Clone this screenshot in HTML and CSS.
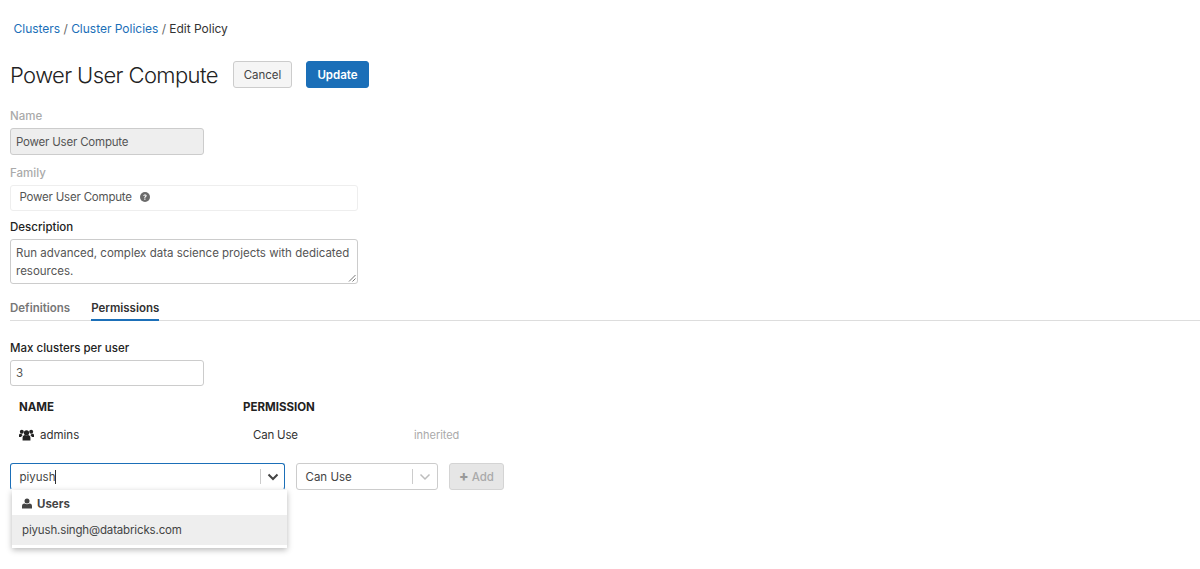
FILE: index.html
```html
<!DOCTYPE html>
<html lang="en">
<head>
<meta charset="utf-8">
<title>Edit Policy</title>
<link rel="stylesheet" href="styles.css">
</head>
<body>
<main class="page">
  <nav class="crumbs"><a href="#">Clusters</a> / <a href="#">Cluster Policies</a> / <span class="crumb-current">Edit Policy</span></nav>
  <header class="title-row">
    <h1>Power User Compute</h1>
    <button class="btn btn-cancel">Cancel</button>
    <button class="btn btn-update">Update</button>
  </header>

  <label class="label label-muted label-name">Name</label>
  <div class="field field-short field-disabled">Power User Compute</div>

  <label class="label label-muted label-family">Family</label>
  <div class="field field-long field-family"><span>Power User Compute</span>
    <svg class="help" viewBox="0 0 16 16" width="10" height="10"><circle cx="8" cy="8" r="8" fill="#6b6b6b"/><path d="M5.400 6.100c.1-1.500 1.200-2.300 2.700-2.300 1.500 0 2.600.8 2.600 2.100 0 1-.6 1.500-1.300 2-.6.4-.8.6-.8 1.200v.3H6.900v-.4c0-1 .4-1.500 1.100-2 .5-.3.8-.6.8-1 0-.5-.4-.8-.9-.8-.6 0-1 .4-1 1H5.400zM6.800 10.400h1.900v1.800H6.800z" fill="#fff"/></svg>
  </div>

  <label class="label label-desc">Description</label>
  <div class="field field-long field-desc">Run advanced, complex data science projects with dedicated resources.
    <svg class="grip" viewBox="0 0 8 8" width="8" height="8"><path d="M1 7.500 7.500 1M4.500 7.500 7.500 4.500" stroke="#777" stroke-width="1" fill="none"/></svg>
  </div>

  <div class="tabs">
    <span class="tab">Definitions</span>
    <span class="tab tab-active">Permissions</span>
  </div>

  <label class="label label-max">Max clusters per user</label>
  <div class="field field-short field-max">3</div>

  <div class="table-head">
    <span class="col-name">NAME</span>
    <span>PERMISSION</span>
  </div>
  <div class="table-row">
    <span class="col-name admins">
      <svg class="group-icon" viewBox="0 0 16 12" width="15" height="12"><circle cx="8" cy="3.600" r="2.800" fill="#222"/><circle cx="3" cy="2.600" r="2.100" fill="#222"/><circle cx="13" cy="2.600" r="2.100" fill="#222"/><path d="M3.800 11.800V9c0-1.800 1.400-2.900 2.600-2.900.5.300 1 .5 1.600.5s1.100-.2 1.600-.5c1.200 0 2.600 1.100 2.600 2.900v2.800zM0 8V6.300C0 5 .8 4.700 1.600 4.700c.4.300.9.400 1.400.4.200.4.500.8.900 1.100-.9.400-1.400 1-1.600 1.800zM16 8V6.300c0-1.300-.8-1.600-1.600-1.600-.4.300-.9.400-1.400.4-.2.400-.5.800-.9 1.100.9.400 1.400 1 1.600 1.800z" fill="#222"/></svg>
      admins
    </span>
    <span class="can-use">Can Use</span>
    <span class="inherited">inherited</span>
  </div>

  <div class="add-row">
    <div class="select select-user">
      <span class="select-value">piyush<i class="caret"></i></span>
      <span class="select-sep"></span>
      <svg class="chev" viewBox="0 0 12 8" width="12" height="8"><path d="M1.500 1.500 6 6l4.500-4.500" stroke="#444" stroke-width="2" fill="none"/></svg>
      <div class="menu">
        <div class="menu-group">
          <svg viewBox="0 0 12 12" width="10" height="11"><circle cx="6" cy="3" r="3" fill="#444"/><path d="M0 12V9c0-2 1.500-3 3-3 .9.600 1.900.9 3 .9s2.100-.3 3-.9c1.500 0 3 1 3 3v3z" fill="#444"/></svg>
          Users
        </div>
        <div class="menu-item">piyush.singh@databricks.com</div>
      </div>
    </div>
    <div class="select select-perm">
      <span class="select-value">Can Use</span>
      <span class="select-sep"></span>
      <svg class="chev" viewBox="0 0 12 8" width="12" height="8"><path d="M1.500 1.500 6 6l4.500-4.500" stroke="#bdbdbd" stroke-width="1.500" fill="none"/></svg>
    </div>
    <button class="btn btn-add"><span class="plus">+</span> Add</button>
  </div>
</main>
</body>
</html>
```
FILE: styles.css
```css
* { box-sizing: border-box; }
html, body { margin: 0; padding: 0; }
body {
  font-family: Inter, "Liberation Sans", sans-serif;
  font-size: 11.500px;
  color: #333;
  background: #fff;
  height: 569px;
  overflow: hidden;
}
.page { padding: 21px 0 0 10px; }
.crumbs { height: 15px; line-height: 15px; padding-left: 3.500px; color: #666; font-size: 12px; letter-spacing: -0.020px; }
.crumbs a { color: #1b6fb8; text-decoration: none; }
.crumb-current { color: #333; }

.title-row { display: flex; align-items: center; height: 27px; margin-top: 25px; }
h1 { margin: 0; font-size: 22px; font-weight: 300; color: #222; letter-spacing: -0.600px; width: 223px; white-space: nowrap; }
.btn { font-family: inherit; font-size: 11.500px; height: 27px; border-radius: 3px; padding: 0; }
.btn-cancel { width: 59px; background: #f5f5f5; border: 1px solid #ccc; color: #444; margin-right: 14px; }
.btn-update { width: 63px; background: #1b6fb8; border: 1px solid #1b6fb8; color: #fff; font-weight: 600; }

.label { display: block; line-height: 14px; font-weight: 500; color: #222; }
.label-muted { color: #aaa; }
.label-name { margin-top: 21px; }
.label-family { margin-top: 11px; }
.label-desc { margin-top: 9px; }
.label-max { margin-top: 20px; }

.field { border: 1px solid #ccc; border-radius: 3px; padding-left: 5px; color: #555; display: flex; align-items: center; letter-spacing: -0.200px; }
.field-short { width: 194px; height: 27px; }
.field-long { width: 348px; }
.field-disabled { margin-top: 5px; background: #eee; }
.field-family { margin-top: 5px; height: 26px; border-color: #eee; padding: 0 0 2px 8.500px; gap: 8px; }
.field-desc { margin-top: 5px; height: 45px; padding: 4px 5px; display: block; line-height: 18px; position: relative; letter-spacing: 0; }
.help { display: block; }
.grip { position: absolute; right: 1px; bottom: 1px; }
.field-max { margin-top: 5px; height: 26px; }

.tabs { display: flex; gap: 21px; height: 22px; margin-top: 15px; border-bottom: 1px solid #ddd; font-weight: 600; }
.tab { color: #777; line-height: 19px; height: 22px; }
.tab-active { color: #333; border-bottom: 2px solid #1b6fb8; }

.table-head { display: flex; margin-top: 14px; line-height: 14px; font-weight: 700; color: #222; font-size: 11.500px; }
.col-name { width: 233px; padding-left: 9px; }
.table-row { display: flex; align-items: center; height: 16px; margin-top: 13px; color: #333; }
.admins { display: flex; align-items: center; gap: 6px; }
.can-use { width: 171px; padding-left: 10px; letter-spacing: -0.200px; }
.inherited { color: #aaa; font-size: 11px; letter-spacing: -0.050px; }

.add-row { display: flex; gap: 11px; margin-top: 20px; align-items: center; }
.select { display: flex; align-items: center; height: 27px; border: 1px solid #ccc; border-radius: 3px; background: #fff; position: relative; }
.select-user { width: 275px; border: 1.500px solid #1b6fb8; border-bottom-color: #fff; padding-left: 8.500px; }
.select-perm { width: 142px; padding-left: 8.500px; }
.select-value { flex: 1; color: #444; }
.caret { display: inline-block; width: 1px; height: 14px; background: #333; vertical-align: -3px; }
.select-sep { width: 1px; height: 15px; background: #ccc; margin-right: 6px; }
.chev { margin-right: 6px; }
.select-user .chev { margin-right: 5px; }
.btn-add { width: 55px; background: #e6e6e6; border: 1px solid #d4d4d4; color: #aaa; font-weight: 500; }
.plus { font-weight: 800; color: #999; font-size: 14px; line-height: 12px; }

.menu { position: absolute; left: 1px; top: 25.500px; width: 275px; height: 58px; background: #fff; box-shadow: 0 2px 6px rgba(0,0,0,.28); z-index: 2; letter-spacing: -0.150px; }
.menu-group { display: flex; align-items: center; gap: 5px; height: 25px; padding: 3px 0 0 10px; font-weight: 700; color: #444; letter-spacing: 0; }
.menu-item { height: 30px; line-height: 30px; background: #eee; padding-left: 10px; color: #444; }
```
